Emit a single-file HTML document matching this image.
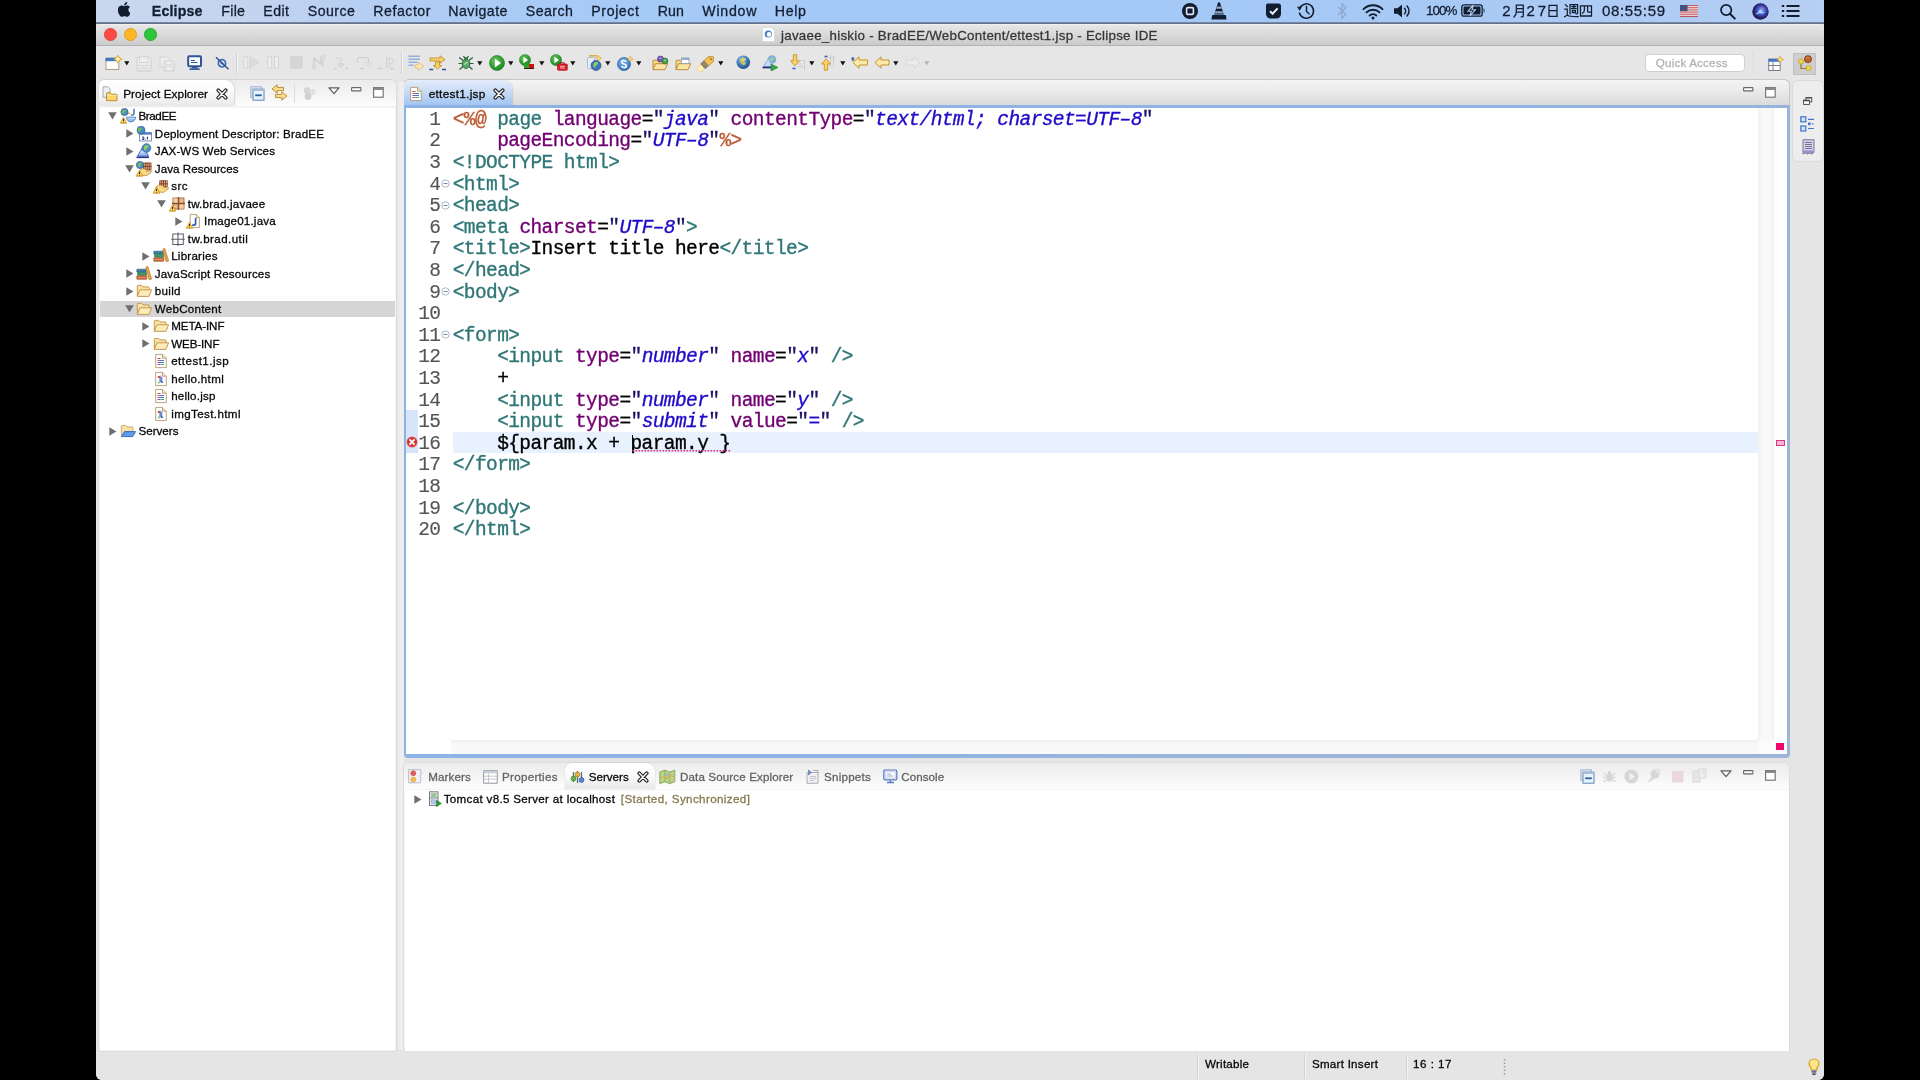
<!DOCTYPE html>
<html>
<head>
<meta charset="utf-8">
<title>Eclipse IDE</title>
<style>
*{box-sizing:border-box;margin:0;padding:0}
html,body{width:1920px;height:1080px;overflow:hidden;background:#000}
body{font-family:"Liberation Sans",sans-serif;color:#1c1c1c;position:relative}
#win{will-change:transform;position:absolute;left:0;top:0;width:1920px;height:1080px;overflow:hidden}
.a{position:absolute;display:block}
.t{position:absolute;white-space:nowrap;-webkit-text-stroke:.28px currentColor}
.c{position:absolute;white-space:pre;font-family:"Liberation Mono",monospace;font-size:19.5px;letter-spacing:-0.59px;line-height:22px;color:#000;-webkit-text-stroke:.35px currentColor}
.tg{color:#2f7676}.at{color:#720072}.vl{color:#200ac8;font-style:italic}.dr{color:#bc5a34}
.ln{color:#555;-webkit-text-stroke:.12px currentColor}
.q{color:#1b1464}
</style>
</head>
<body>
<div id="win">
<div class="a" style="left:96px;top:20px;width:1728px;height:1060px;background:#e5e5e5;border-radius:0 0 6px 6px;"></div>
<div class="a" style="left:96px;top:0px;width:1728px;height:22px;background:linear-gradient(90deg,#c9d6ee 0px,#c4d4ef 150px,#b2cdf3 300px,#a8cbf6 420px,#a3c9f8 800px,#a6c9f6 1300px,#afcbf4 1550px,#b6cff2 1728px);"></div>
<div class="a" style="left:96px;top:22px;width:1728px;height:2px;background:linear-gradient(#8090ac,#59657e);"></div>
<div class="t" style="left:151.80px;top:2.93px;font-size:14.2px;line-height:17.75px;color:#131d30;letter-spacing:0.162px;font-weight:bold;">Eclipse</div>
<div class="t" style="left:221.30px;top:2.93px;font-size:14.2px;line-height:17.75px;color:#131d30;letter-spacing:0.273px;">File</div>
<div class="t" style="left:263.30px;top:2.93px;font-size:14.2px;line-height:17.75px;color:#131d30;letter-spacing:0.410px;">Edit</div>
<div class="t" style="left:307.80px;top:2.93px;font-size:14.2px;line-height:17.75px;color:#131d30;letter-spacing:0.442px;">Source</div>
<div class="t" style="left:373.30px;top:2.93px;font-size:14.2px;line-height:17.75px;color:#131d30;letter-spacing:0.505px;">Refactor</div>
<div class="t" style="left:448.30px;top:2.93px;font-size:14.2px;line-height:17.75px;color:#131d30;letter-spacing:0.451px;">Navigate</div>
<div class="t" style="left:525.80px;top:2.93px;font-size:14.2px;line-height:17.75px;color:#131d30;letter-spacing:0.442px;">Search</div>
<div class="t" style="left:591.30px;top:2.93px;font-size:14.2px;line-height:17.75px;color:#131d30;letter-spacing:0.584px;">Project</div>
<div class="t" style="left:657.80px;top:2.93px;font-size:14.2px;line-height:17.75px;color:#131d30;letter-spacing:0.075px;">Run</div>
<div class="t" style="left:702.30px;top:2.93px;font-size:14.2px;line-height:17.75px;color:#131d30;letter-spacing:0.739px;">Window</div>
<div class="t" style="left:774.80px;top:2.93px;font-size:14.2px;line-height:17.75px;color:#131d30;letter-spacing:0.665px;">Help</div>
<svg class="a" style="left:118px;top:2px;" width="12.4" height="16" viewBox="2 2.300 11 14.900" preserveAspectRatio="none"><path d="M11.2 9.6c0-1.7 1.4-2.5 1.5-2.6-.8-1.2-2.1-1.4-2.5-1.4-1.1-.1-2.1.6-2.6.6-.6 0-1.4-.6-2.3-.6-1.2 0-2.3.7-2.9 1.8-1.2 2.1-.3 5.3.9 7 .6.8 1.3 1.8 2.2 1.7.9 0 1.2-.6 2.3-.6 1 0 1.3.6 2.3.6.9 0 1.5-.8 2.1-1.7.7-1 .9-1.9.9-2-.1 0-1.9-.7-1.9-2.8zM9.5 4.5c.5-.6.8-1.4.7-2.2-.7 0-1.5.5-2 1-.4.5-.8 1.3-.7 2.1.8.1 1.5-.4 2-.9z" fill="#131d30"/></svg>
<svg class="a" style="left:1181px;top:2px;" width="18" height="18" viewBox="0 0 18 18" preserveAspectRatio="none"><circle cx="9" cy="9" r="8" fill="#131d30"/><rect x="5.6" y="5.6" width="6.8" height="6.8" rx="1.2" fill="none" stroke="#dfe8f8" stroke-width="1.6"/></svg>
<svg class="a" style="left:1210px;top:1px;" width="18" height="20" viewBox="0 0 18 20" preserveAspectRatio="none"><path d="M9 1.2c.7 0 1 .5 1.2 1.1l3.6 11.2H4.2L7.8 2.3C8 1.700 8.300 1.200 9 1.200z" fill="#131d30"/><path d="M6.900 5.600h4.200l.7 2.200H6.200zM5.400 10.200h7.200l.7 2.200H4.700z" fill="#8fa6c8"/><path d="M2.200 14h13.600l.8 4.500H1.400z" fill="#131d30"/></svg>
<svg class="a" style="left:1265px;top:2px;" width="18" height="18" viewBox="0 0 18 18" preserveAspectRatio="none"><path d="M2.500 1.500h11c1.700 0 2.500 1 2.500 2.500v8c0 2.500-2 4.500-4.500 4.500h-6C3 16.500 1 14.500 1 12V4c0-1.500.5-2.500 1.500-2.500z" fill="#131d30"/><path d="M5 9.200l2.600 2.600 5-5.400" fill="none" stroke="#e8effa" stroke-width="2"/></svg>
<svg class="a" style="left:1296px;top:1px;" width="20" height="20" viewBox="0 0 20 20" preserveAspectRatio="none"><path d="M4.200 6.300A7.200 7.200 0 1 1 3.300 11.500" fill="none" stroke="#131d30" stroke-width="1.500"/><path d="M1 5.800l5.200-.3-2.600 4.200z" fill="#131d30"/><path d="M10.500 5.500v5l2.600 2.200" fill="none" stroke="#131d30" stroke-width="1.500" stroke-linecap="round"/></svg>
<svg class="a" style="left:1336px;top:2px;" width="12" height="18" viewBox="0 0 12 18" preserveAspectRatio="none"><path d="M2 5l8 7.500-4 3.500V2l4 3.500L2 13" fill="none" stroke="#90a7cb" stroke-width="1.300"/></svg>
<svg class="a" style="left:1362px;top:2px;" width="22" height="18" viewBox="0 0 22 18" preserveAspectRatio="none"><path d="M1.500 7.200a13.500 13.500 0 0 1 19 0M4.500 10.400a9.200 9.200 0 0 1 13 0M7.700 13.500a4.700 4.700 0 0 1 6.600 0" fill="none" stroke="#131d30" stroke-width="1.900" stroke-linecap="round"/><circle cx="11" cy="16" r="1.500" fill="#131d30"/></svg>
<svg class="a" style="left:1393px;top:2px;" width="20" height="18" viewBox="0 0 20 18" preserveAspectRatio="none"><path d="M1 6.300h3.500L9 2.500v13L4.500 11.700H1z" fill="#131d30"/><path d="M11.500 6.200a4 4 0 0 1 0 5.600M14 4a7.200 7.200 0 0 1 0 10" fill="none" stroke="#131d30" stroke-width="1.500" stroke-linecap="round"/></svg>
<div class="t" style="left:1426.00px;top:3.40px;font-size:13.4px;line-height:16.75px;color:#131d30;letter-spacing:-0.924px;">100%</div>
<svg class="a" style="left:1461px;top:4px;" width="26" height="14" viewBox="0 0 26 14" preserveAspectRatio="none"><rect x=".8" y=".8" width="20.400" height="11.400" rx="2.200" fill="none" stroke="#131d30" stroke-width="1.300"/><rect x="2.500" y="2.500" width="17" height="8" rx="1" fill="#131d30"/><path d="M22.700 4.300c1.200.3 1.200 4.100 0 4.400z" fill="#131d30"/><path d="M12.200 1.200L7 7.200h3.300L9 12l5.400-6.300h-3.300z" fill="#131d30" stroke="#b4cdf3" stroke-width="1.100"/></svg>
<div class="t" style="left:1502.30px;top:2.17px;font-size:15px;line-height:18.75px;color:#131d30;letter-spacing:1.058px;">2</div>
<div class="t" style="left:1526.50px;top:2.17px;font-size:15px;line-height:18.75px;color:#131d30;letter-spacing:2.815px;">27</div>
<div class="t" style="left:1602.00px;top:2.17px;font-size:15px;line-height:18.75px;color:#131d30;letter-spacing:0.659px;">08:55:59</div>
<svg class="a" style="left:1513px;top:4px;" width="12" height="14" viewBox="0 0 12 14" preserveAspectRatio="none"><path d="M3.300 1.200h7v10.500c0 1-.5 1.300-2 1.200M3.300 1.200v6.500c0 2.500-.8 4-2.300 5.300M3.600 4.600h6.400M3.600 8h6.400" fill="none" stroke="#131d30" stroke-width="1.250" stroke-linecap="square"/></svg>
<svg class="a" style="left:1547px;top:4px;" width="12" height="14" viewBox="0 0 12 14" preserveAspectRatio="none"><path d="M2 1.400h8v11h-8zM2.300 6.700h7.400" fill="none" stroke="#131d30" stroke-width="1.250" stroke-linecap="square"/></svg>
<svg class="a" style="left:1564px;top:3px;" width="15" height="15" viewBox="0 0 15 15" preserveAspectRatio="none"><path d="M1.500 1.800l1.800 1.700M.8 6.200h2.500v5.200M.6 13.800c1.500-1.200 2.400-1.800 3.200-1.400 1.500 1.300 4 1.400 10.300 1.300M6 10.800V1.600h7.600v8.200c0 .9-.4 1.100-1.400 1M8 3.700h3.700M9.800 2.200v3.400M7.600 5.700h4.400M8.400 7.500h3v2h-3z" fill="none" stroke="#131d30" stroke-width="1.250" stroke-linecap="square" stroke-width="1.050"/></svg>
<svg class="a" style="left:1579px;top:4px;" width="14" height="14" viewBox="0 0 14 14" preserveAspectRatio="none"><path d="M1.500 1.800h11v10.400h-11zM5.400 2v3.800c0 1.700-.6 2.800-1.800 3.500M8.600 2v5.200c0 .8.300 1 1.200 1h2.400M1.800 11.800h10.400" fill="none" stroke="#131d30" stroke-width="1.250" stroke-linecap="square"/></svg>
<svg class="a" style="left:1680px;top:5px;" width="19" height="13" viewBox="0 0 19 13" preserveAspectRatio="none"><rect width="18" height="12" fill="#f4eef0"/><rect y="0.00" width="18" height="0.95" fill="#c4545c"/><rect y="1.85" width="18" height="0.95" fill="#c4545c"/><rect y="3.70" width="18" height="0.95" fill="#c4545c"/><rect y="5.55" width="18" height="0.95" fill="#c4545c"/><rect y="7.40" width="18" height="0.95" fill="#c4545c"/><rect y="9.25" width="18" height="0.95" fill="#c4545c"/><rect y="11.10" width="18" height="0.95" fill="#c4545c"/><rect width="7.500" height="6.200" fill="#46507e"/><rect y="11.200" width="18" height="0.800" fill="#b0505c"/></svg>
<svg class="a" style="left:1719px;top:3px;" width="18" height="17" viewBox="0 0 18 17" preserveAspectRatio="none"><circle cx="7.200" cy="7" r="5.200" fill="none" stroke="#131d30" stroke-width="1.700"/><path d="M11 10.800l4.800 4.800" stroke="#131d30" stroke-width="2" stroke-linecap="round"/></svg>
<svg class="a" style="left:1752px;top:3px;" width="17" height="17" viewBox="0 0 17 17" preserveAspectRatio="none"><defs><radialGradient id="sg" cx=".55" cy=".45" r=".6"><stop offset="0" stop-color="#7fd0ff"/><stop offset=".35" stop-color="#4a62d8"/><stop offset=".7" stop-color="#2a2470"/><stop offset="1" stop-color="#161238"/></radialGradient></defs><circle cx="8.500" cy="8.500" r="8.200" fill="url(#sg)"/><path d="M3 11c2-.5 3.500-2 5-4.500 1 2 2.500 3 5.500 2.500-2 1.500-4 1.800-5.500.8C6.800 11 5 11.500 3 11z" fill="#bfe6ff" opacity=".85"/><path d="M9 3.500c1.500.5 3 1.500 4 3-1.500-.8-3-1-4.500-.5z" fill="#e45a9a" opacity=".8"/></svg>
<svg class="a" style="left:1781px;top:4px;" width="20" height="14" viewBox="0 0 20 14" preserveAspectRatio="none"><path d="M5.500 2h13M5.500 7h13M5.500 12h13" stroke="#131d30" stroke-width="2.100"/><path d="M.8 2h2.400M.8 7h2.400M.8 12h2.400" stroke="#131d30" stroke-width="2.100"/></svg>
<div class="a" style="left:96px;top:24px;width:1728px;height:22px;background:linear-gradient(#f6f6f6 0,#e6e6e5 1.500px,#dcdcdc 40%,#cbcbcb);border-radius:5px 5px 0 0;border-bottom:1px solid #b3b3b3;"></div>
<div class="a" style="left:104.0px;top:28.099999999999998px;width:12.6px;height:12.6px;background:#fc4a44;border-radius:50%;border:0.5px solid #e0443e;"></div>
<div class="a" style="left:124.10000000000001px;top:28.099999999999998px;width:12.6px;height:12.6px;background:#fdb724;border-radius:50%;border:0.5px solid #e0a028;"></div>
<div class="a" style="left:144.2px;top:28.099999999999998px;width:12.6px;height:12.6px;background:#2bc63a;border-radius:50%;border:0.5px solid #27aa35;"></div>
<svg class="a" style="left:762px;top:27px;" width="13" height="15" viewBox="0 0 13 15" preserveAspectRatio="none"><path d="M.5.500h9l3 3v11H.5z" fill="#fff" stroke="#d0d0d0" stroke-width=".6"/><circle cx="6.300" cy="7" r="3.600" fill="#3f7fc0"/><circle cx="7" cy="7.400" r="2.300" fill="#fff"/></svg>
<div class="t" style="left:781.00px;top:28.09px;font-size:13.3px;line-height:16.62px;color:#363636;letter-spacing:0.276px;">javaee_hiskio - BradEE/WebContent/ettest1.jsp - Eclipse IDE</div>
<div class="a" style="left:96px;top:46px;width:1728px;height:34px;background:#e6e6e6;"></div>
<div class="a" style="left:96px;top:80px;width:1728px;height:1000px;background:#e5e5e5;border-radius:0 0 6px 6px;"></div>
<svg class="a" style="left:104.5px;top:54.5px;" width="17" height="16" viewBox="0 0 17 16" preserveAspectRatio="none"><rect x="1" y="3.200" width="12.800" height="11.300" fill="#fdfdfd" stroke="#a89670" stroke-width=".9"/><rect x="1" y="3.200" width="12.800" height="2.600" fill="#3f7fd0" stroke="#2f63a8" stroke-width=".7"/><path d="M12.800 .3l2 2.700 1.900 1-1.900 1.200-2 2.800-1.900-2.800L9 4l1.900-1z" fill="#fbe07c" stroke="#c89a2c" stroke-width=".8" stroke-linejoin="round"/><circle cx="12.800" cy="4" r="1.200" fill="#fff8d0"/></svg>
<svg class="a" style="left:123.7px;top:61.4px;" width="6" height="5" viewBox="0 0 6 5" preserveAspectRatio="none"><path d="M.2.200h5.200L2.800 4.600z" fill="#111"/></svg>
<svg class="a" style="left:135.5px;top:55.5px;" width="17" height="16" viewBox="0 0 17 16" preserveAspectRatio="none"><path d="M1 1h12.500l1.800 1.800V15H1z" fill="#ececec" stroke="#d3d3d3" stroke-width="1"/><rect x="3.500" y="1" width="8.500" height="5.500" fill="#f0f0f0" stroke="#d3d3d3" stroke-width=".9"/><rect x="3" y="9.500" width="10" height="5.500" fill="#eee" stroke="#d3d3d3" stroke-width=".9"/><path d="M4.500 11.500h7M4.500 13.200h7" stroke="#d3d3d3" stroke-width=".8"/></svg>
<svg class="a" style="left:158.5px;top:55.5px;" width="17" height="16" viewBox="0 0 17 16" preserveAspectRatio="none"><path d="M1 1h8l1.500 1.500V11H1z" fill="#ececec" stroke="#d3d3d3" stroke-width="1"/><path d="M5 5h8.500l1.800 1.800V15H5z" fill="#ececec" stroke="#d3d3d3" stroke-width="1"/><rect x="7" y="5" width="5.500" height="3.500" fill="#f0f0f0" stroke="#d3d3d3" stroke-width=".8"/><rect x="6.800" y="10.500" width="7" height="4.500" fill="#eee" stroke="#d3d3d3" stroke-width=".8"/></svg>
<svg class="a" style="left:186.5px;top:54.5px;" width="16" height="16" viewBox="0 0 16 16" preserveAspectRatio="none"><rect x="1.200" y="1.200" width="12.800" height="10" rx="1" fill="#fff" stroke="#2f5496" stroke-width="2"/><path d="M4 5.500h4M4 7.500h6.500" stroke="#2f5496" stroke-width="1"/><path d="M5.500 11.500l-1.500 2h7.200l-1.500-2z" fill="#2f5496"/><path d="M2.500 14.200h10.200" stroke="#2f5496" stroke-width="1.500"/></svg>
<svg class="a" style="left:214.5px;top:55.5px;" width="15" height="15" viewBox="0 0 15 15" preserveAspectRatio="none"><circle cx="7" cy="7.300" r="3.600" fill="#dfe9f8" stroke="#3f6fb8" stroke-width="1.800"/><circle cx="7" cy="7.300" r="1.200" fill="#3f6fb8"/><path d="M1 1.200l12.500 12" stroke="#2f4f8f" stroke-width="1.500"/></svg>
<div class="a" style="left:236px;top:52px;width:1px;height:21.5px;background:#d2d2d2;"></div>
<div class="a" style="left:237px;top:52px;width:1px;height:21.5px;background:#f4f4f4;"></div>
<svg class="a" style="left:242.5px;top:56px;" width="17" height="13" viewBox="0 0 17 13" preserveAspectRatio="none"><rect x=".7" y=".7" width="3.600" height="11.300" fill="#ededed" stroke="#d3d3d3" stroke-width=".9"/><path d="M6.500 .5l9.500 6-9.500 6z" fill="#dcdcdc" stroke="#d3d3d3" stroke-width=".8"/></svg>
<svg class="a" style="left:267px;top:56px;" width="13" height="13" viewBox="0 0 13 13" preserveAspectRatio="none"><rect x=".7" y=".7" width="4" height="11.300" fill="#ededed" stroke="#d3d3d3" stroke-width=".9"/><rect x="7.500" y=".7" width="4" height="11.300" fill="#ededed" stroke="#d3d3d3" stroke-width=".9"/></svg>
<svg class="a" style="left:289.5px;top:56px;" width="13" height="13" viewBox="0 0 13 13" preserveAspectRatio="none"><rect x=".7" y=".7" width="11.300" height="11.300" fill="#d6d6d6" stroke="#cfcfcf" stroke-width=".9"/></svg>
<svg class="a" style="left:310.5px;top:55px;" width="16" height="15" viewBox="0 0 16 15" preserveAspectRatio="none"><path d="M3 11V3l7 6V2.500" fill="none" stroke="#cdcdcd" stroke-width="1.300"/><circle cx="3" cy="11.800" r="2" fill="#e2e2e2" stroke="#cdcdcd" stroke-width=".9"/><circle cx="12" cy="2.800" r="2.200" fill="#e2e2e2" stroke="#cdcdcd" stroke-width=".9"/><path d="M12 5v7" stroke="#cdcdcd" stroke-width="1.100"/></svg>
<svg class="a" style="left:333px;top:55.5px;" width="16" height="15" viewBox="0 0 16 15" preserveAspectRatio="none"><path d="M2 2h4M8 1v7M5 8h6l-3 3.500z" fill="#e4e4e4" stroke="#d0d0d0" stroke-width="1"/><path d="M.5 12.500h3.500M12 12.500h3.500" stroke="#cfcfcf" stroke-width="1.500"/></svg>
<svg class="a" style="left:356px;top:55.5px;" width="16" height="15" viewBox="0 0 16 15" preserveAspectRatio="none"><path d="M1.500 7V3c0-1 .5-1.500 1.500-1.500h8c1 0 1.500.5 1.500 1.500v3M9.500 6.500h6l-3 3.500z" fill="none" stroke="#d0d0d0" stroke-width="1.100"/><path d="M9.500 6.500h6l-3 3.500z" fill="#e6e6e6"/><path d="M4 12.500h4" stroke="#cfcfcf" stroke-width="1.500"/></svg>
<svg class="a" style="left:377.5px;top:55.5px;" width="17" height="15" viewBox="0 0 17 15" preserveAspectRatio="none"><path d="M8.500 1v11M11 1v11" stroke="#d0d0d0" stroke-width="1.100"/><path d="M11 2c3 0 4 1.500 4 3s-1 3-4 3" fill="none" stroke="#d4d4d4" stroke-width="1"/><path d="M.5 12.500h4M12.500 12.500h4" stroke="#cfcfcf" stroke-width="1.500"/></svg>
<div class="a" style="left:400.5px;top:52px;width:1px;height:21.5px;background:#d2d2d2;"></div>
<div class="a" style="left:401.5px;top:52px;width:1px;height:21.5px;background:#f4f4f4;"></div>
<svg class="a" style="left:407.5px;top:55px;" width="16" height="16" viewBox="0 0 16 16" preserveAspectRatio="none"><path d="M.5 1.300h11.500M.5 4.300h11.500M.5 7.300h9M.5 10.300h5" stroke="#8fb0dc" stroke-width="1.600"/><path d="M9.500 8v2.500H6.800l0 3h2.700V16l5.500-4z" fill="#fbe9b4" stroke="#e0c078" stroke-width=".9" stroke-linejoin="round" transform="translate(.5,-.8)"/></svg>
<svg class="a" style="left:428.5px;top:55px;" width="18" height="16" viewBox="0 0 18 16" preserveAspectRatio="none"><path d="M1 3h10V.8l5 3.700-5 3.700V6H1z" fill="#f8d36c" stroke="#c0902c" stroke-width=".9" stroke-linejoin="round"/><path d="M6.500 7h4v3.500h2.200L8.500 14 4.300 10.500h2.200z" fill="#f8d36c" stroke="#c0902c" stroke-width=".9" stroke-linejoin="round"/><path d="M.3 14.500h4M13 14.500h4" stroke="#2f4f9f" stroke-width="1.700"/></svg>
<svg class="a" style="left:458px;top:55px;" width="16" height="16" viewBox="0 0 16 16" preserveAspectRatio="none"><path d="M1.200 2.500l4 3M14.800 2.500l-4 3M.5 8.500h4M15.500 8.500h-4M1.500 14.500l4-3.500M14.500 14.500l-4-3.500M5.500 1l1.500 2.500M10.500 1L9 3.500" stroke="#2a5a3a" stroke-width="1.200" fill="none"/><ellipse cx="8" cy="8.800" rx="3.800" ry="4.700" fill="#5aa868" stroke="#2a6a3a" stroke-width=".9"/><circle cx="8" cy="3.800" r="1.900" fill="#3a7a4a"/><path d="M6.200 9.500l3.500-2.500" stroke="#b8e0b8" stroke-width="1.200"/></svg>
<svg class="a" style="left:476.7px;top:61.4px;" width="6" height="5" viewBox="0 0 6 5" preserveAspectRatio="none"><path d="M.2.200h5.200L2.800 4.600z" fill="#111"/></svg>
<svg class="a" style="left:488.5px;top:54.5px;" width="16" height="16" viewBox="0 0 16 16" preserveAspectRatio="none"><defs><radialGradient id="rg" cx=".4" cy=".35" r=".75"><stop offset="0" stop-color="#6cc45c"/><stop offset=".6" stop-color="#2f9a2f"/><stop offset="1" stop-color="#1f7a24"/></radialGradient></defs><circle cx="8" cy="8" r="7.500" fill="url(#rg)" stroke="#1f7a24" stroke-width=".6"/><path d="M5.800 3.600l6.200 4.400-6.200 4.400z" fill="#fff"/></svg>
<svg class="a" style="left:507.7px;top:61.4px;" width="6" height="5" viewBox="0 0 6 5" preserveAspectRatio="none"><path d="M.2.200h5.200L2.800 4.600z" fill="#111"/></svg>
<svg class="a" style="left:518.5px;top:53.8px;" width="12" height="12" viewBox="0 0 16 16" preserveAspectRatio="none"><defs><radialGradient id="rg2" cx=".4" cy=".35" r=".75"><stop offset="0" stop-color="#6cc45c"/><stop offset=".6" stop-color="#2f9a2f"/><stop offset="1" stop-color="#1f7a24"/></radialGradient></defs><circle cx="8" cy="8" r="7.500" fill="url(#rg2)" stroke="#1f7a24" stroke-width=".6"/><path d="M5.800 3.600l6.200 4.400-6.200 4.400z" fill="#fff"/></svg>
<div class="a" style="left:524.3px;top:64px;width:5px;height:4.5px;background:#2aa02a;"></div>
<div class="a" style="left:529.3px;top:64px;width:5px;height:4.5px;background:#c81414;"></div>
<div class="a" style="left:524.3px;top:67.8px;width:10px;height:1px;background:#3a1a1a;"></div>
<svg class="a" style="left:538.5px;top:61.4px;" width="6" height="5" viewBox="0 0 6 5" preserveAspectRatio="none"><path d="M.2.200h5.200L2.800 4.600z" fill="#111"/></svg>
<svg class="a" style="left:549.5px;top:53.8px;" width="12" height="12" viewBox="0 0 16 16" preserveAspectRatio="none"><defs><radialGradient id="rg3" cx=".4" cy=".35" r=".75"><stop offset="0" stop-color="#6cc45c"/><stop offset=".6" stop-color="#2f9a2f"/><stop offset="1" stop-color="#1f7a24"/></radialGradient></defs><circle cx="8" cy="8" r="7.500" fill="url(#rg3)" stroke="#1f7a24" stroke-width=".6"/><path d="M5.800 3.600l6.200 4.400-6.200 4.400z" fill="#fff"/></svg>
<svg class="a" style="left:556.5px;top:62px;" width="11" height="9" viewBox="0 0 11 9" preserveAspectRatio="none"><rect x=".5" y="2" width="9.800" height="6.300" rx=".8" fill="#d8202c" stroke="#a81420" stroke-width=".7"/><path d="M3.500 2V.8h3.800V2" fill="none" stroke="#a81420" stroke-width="1"/><path d="M3 4.300h4.800M3 6h4.800" stroke="#ffd0d0" stroke-width=".9"/></svg>
<svg class="a" style="left:569.7px;top:61.4px;" width="6" height="5" viewBox="0 0 6 5" preserveAspectRatio="none"><path d="M.2.200h5.200L2.800 4.600z" fill="#111"/></svg>
<svg class="a" style="left:586px;top:55px;" width="17" height="16" viewBox="0 0 17 16" preserveAspectRatio="none"><rect x="1.500" y="2.500" width="7" height="11" rx="1" fill="#e8eef8" stroke="#a8b4c8" stroke-width=".9"/><path d="M3 .8h8" stroke="#d8b048" stroke-width="1.600"/><circle cx="10" cy="10.500" r="5" fill="#3f74b8" stroke="#2a4f88" stroke-width=".7"/><path d="M7.500 9c1-2 3-2.400 4.500-1.400.5 1.500-.8 2-1.800 2.800-.8.800-.3 2-1.300 2.300-1.100-.5-1.900-2.200-1.400-3.700z" fill="#8cd060"/><path d="M12.500 .3l1 1.800 1.800 1-1.800 1-1 1.800-1-1.800-1.800-1 1.800-1z" fill="#fbe07c" stroke="#c89a2c" stroke-width=".6"/></svg>
<svg class="a" style="left:605.2px;top:61.4px;" width="6" height="5" viewBox="0 0 6 5" preserveAspectRatio="none"><path d="M.2.200h5.200L2.800 4.600z" fill="#111"/></svg>
<svg class="a" style="left:617px;top:55.5px;" width="17" height="15" viewBox="0 0 17 15" preserveAspectRatio="none"><defs><radialGradient id="sb" cx=".4" cy=".35" r=".75"><stop offset="0" stop-color="#7ab4ec"/><stop offset="1" stop-color="#2f6cb4"/></radialGradient></defs><circle cx="7" cy="8" r="6.600" fill="url(#sb)" stroke="#2a5a9a" stroke-width=".6"/><path d="M9.300 5.800c-.5-.8-1.300-1.200-2.400-1.200-1.300 0-2.200.7-2.200 1.700 0 2.300 4.800 1 4.800 3.500 0 1.100-1 1.800-2.500 1.800-1.200 0-2.100-.5-2.600-1.400" fill="none" stroke="#fff" stroke-width="1.500"/><path d="M13.200 .3l1 1.800 1.800 1-1.800 1-1 1.800-1-1.800-1.800-1 1.800-1z" fill="#fbe07c" stroke="#c89a2c" stroke-width=".6"/></svg>
<svg class="a" style="left:636px;top:61.4px;" width="6" height="5" viewBox="0 0 6 5" preserveAspectRatio="none"><path d="M.2.200h5.200L2.800 4.600z" fill="#111"/></svg>
<svg class="a" style="left:651.5px;top:54.5px;" width="18" height="16" viewBox="0 0 18 16" preserveAspectRatio="none"><g transform="translate(0,1.500)"><path d="M1 13V4.500c0-.5.300-.8.800-.8h3.300l1.300 1.500h5c.5 0 .8.300.8.800v1.200" fill="#f7d98c" stroke="#b8822c" stroke-width=".9"/><path d="M1 13.200l2.600-6h12l-2.600 6z" fill="#fbe4a4" stroke="#b8822c" stroke-width=".9" stroke-linejoin="round"/></g><circle cx="8.500" cy="4" r="3" fill="#7a5ab8" stroke="#4a2f88" stroke-width=".6"/><circle cx="13" cy="6" r="3" fill="#4aa04a" stroke="#2a702a" stroke-width=".6"/><path d="M7.500 3.200h2M12 5.200h2" stroke="#e8e0ff" stroke-width=".8"/></svg>
<svg class="a" style="left:674.5px;top:54.5px;" width="17" height="16" viewBox="0 0 17 16" preserveAspectRatio="none"><g transform="translate(0,1.500)"><path d="M1 13V4.500c0-.5.300-.8.800-.8h3.300l1.300 1.500h5c.5 0 .8.300.8.800v1.200" fill="#f7d98c" stroke="#b8822c" stroke-width=".9"/><path d="M1 13.200l2.600-6h12l-2.600 6z" fill="#fbe4a4" stroke="#b8822c" stroke-width=".9" stroke-linejoin="round"/></g><rect x="6.500" y="3" width="7.500" height="5.500" fill="#fff" stroke="#8a9ab8" stroke-width=".8"/><rect x="6.500" y="3" width="7.500" height="1.800" fill="#8aa4d0"/></svg>
<svg class="a" style="left:696.5px;top:54.5px;" width="18" height="17" viewBox="0 0 18 17" preserveAspectRatio="none"><g transform="rotate(-42 9 8.500)"><rect x="-1.500" y="5.500" width="6.500" height="6" rx="2.500" fill="#fdf0b8" stroke="#e0c880" stroke-width=".6"/><rect x="5" y="5.200" width="4.500" height="6.600" fill="#9a8478" stroke="#6a5448" stroke-width=".6"/><path d="M9.500 5h6l3.500 3.500-3.500 3.500h-6z" fill="#f0c45c" stroke="#b88a2c" stroke-width=".8"/><circle cx="15.500" cy="8.500" r="1" fill="#b06030"/></g></svg>
<svg class="a" style="left:717.5px;top:61.4px;" width="6" height="5" viewBox="0 0 6 5" preserveAspectRatio="none"><path d="M.2.200h5.200L2.800 4.600z" fill="#111"/></svg>
<svg class="a" style="left:735.5px;top:54.5px;" width="15" height="15" viewBox="0 0 15 15" preserveAspectRatio="none"><defs><radialGradient id="gl" cx=".4" cy=".3" r=".8"><stop offset="0" stop-color="#8cc4f0"/><stop offset=".55" stop-color="#3a74b8"/><stop offset="1" stop-color="#1f3f78"/></radialGradient></defs><circle cx="7.300" cy="7.300" r="6.800" fill="url(#gl)"/><path d="M4 4c1.500-1.500 3.500-2 5-1 1 1-.2 2.200-1 3 .8 1 1.800 1.200 2 2.500-.5 1.500-2 2-3.200 1.500C6 8.800 4.800 8.500 4.200 7 3.800 6 3.600 5 4 4z" fill="#d8c84c" opacity=".85"/><path d="M6 3.500l2 2.500 1.500-2.200" fill="none" stroke="#f4eea0" stroke-width=".8"/></svg>
<svg class="a" style="left:762px;top:55px;" width="17" height="16" viewBox="0 0 17 16" preserveAspectRatio="none"><circle cx="10" cy="4.500" r="4" fill="#7ab0e4" stroke="#9ab4d0" stroke-width=".6"/><path d="M8 4c1-1.500 2.500-1.800 3.500-1 .4 1-.6 1.500-1.400 2-.6.600-.2 1.500-1 1.800C8.300 6.300 7.600 5 8 4z" fill="#a8d880"/><path d="M6.500 3L1.500 11.500h9.500z" fill="#c4d8f4" stroke="#7a98d0" stroke-width=".8" stroke-linejoin="round" opacity=".9"/><path d="M.5 12.500h8.500" stroke="#1f2f8c" stroke-width="1.700"/><path d="M9 9l7 3.500-7 3.500z" fill="#3aa84a" stroke="#1f7a2c" stroke-width=".6"/></svg>
<svg class="a" style="left:790px;top:54px;" width="16" height="17" viewBox="0 0 16 17" preserveAspectRatio="none"><path d="M10 6.500h4.500v9.500M8 10h4M8 12.500h5" fill="none" stroke="#c4c8d4" stroke-width=".9"/><path d="M3.300 .6h3.400v6.200h2.800L5 12 .5 6.800h2.800z" fill="#fbd468" stroke="#c8902c" stroke-width=".9" stroke-linejoin="round"/><path d="M2.500 14.500h3" stroke="#3f5fb8" stroke-width="1.600"/></svg>
<svg class="a" style="left:809px;top:61.4px;" width="6" height="5" viewBox="0 0 6 5" preserveAspectRatio="none"><path d="M.2.200h5.200L2.800 4.600z" fill="#111"/></svg>
<svg class="a" style="left:820.5px;top:54px;" width="16" height="17" viewBox="0 0 16 17" preserveAspectRatio="none"><path d="M9.500 1v12M12.500 2v11M7 3.500h7" fill="none" stroke="#c4c8d4" stroke-width=".9"/><path d="M3.300 16.200h3.400V10h2.800L5 4.800.5 10h2.800z" fill="#fbd468" stroke="#c8902c" stroke-width=".9" stroke-linejoin="round"/><path d="M3.500 2.500h3" stroke="#3f5fb8" stroke-width="1.600"/></svg>
<svg class="a" style="left:839.8px;top:61.4px;" width="6" height="5" viewBox="0 0 6 5" preserveAspectRatio="none"><path d="M.2.200h5.200L2.800 4.600z" fill="#111"/></svg>
<svg class="a" style="left:850.5px;top:55.5px;" width="18" height="14" viewBox="0 0 18 14" preserveAspectRatio="none"><path d="M8 .8L2 6.500l6 5.700V9h8.500V4H8z" fill="#fbe9a8" stroke="#c8902c" stroke-width="1" stroke-linejoin="round"/><path d="M1.800 1v4M.3 2.200h3M.3 3.800h3" stroke="#2f4f8f" stroke-width=".9"/></svg>
<svg class="a" style="left:873.5px;top:55.5px;" width="16" height="14" viewBox="0 0 16 14" preserveAspectRatio="none"><path d="M7 .8L1 6.500l6 5.700V9h8V4H7z" fill="#fbe9a8" stroke="#c8902c" stroke-width="1" stroke-linejoin="round"/></svg>
<svg class="a" style="left:893.2px;top:61.4px;" width="6" height="5" viewBox="0 0 6 5" preserveAspectRatio="none"><path d="M.2.200h5.200L2.800 4.600z" fill="#111"/></svg>
<svg class="a" style="left:904.5px;top:55.5px;" width="16" height="14" viewBox="0 0 16 14" preserveAspectRatio="none"><path d="M9 .8l6 5.700-6 5.700V9H1V4h8z" fill="#ececec" stroke="#d6d6d6" stroke-width="1" stroke-linejoin="round"/></svg>
<svg class="a" style="left:924px;top:61.4px;" width="6" height="5" viewBox="0 0 6 5" preserveAspectRatio="none"><path d="M.2.200h5.200L2.800 4.600z" fill="#b4b4b4"/></svg>
<div class="a" style="left:1644.7px;top:53.7px;width:100.5px;height:18px;background:#fff;border:1px solid #cfcfcf;border-radius:4px;"></div>
<div class="t" style="left:1655.80px;top:55.72px;font-size:11.6px;line-height:14.50px;color:#b2b2b2;letter-spacing:0.189px;">Quick Access</div>
<svg class="a" style="left:1752px;top:52px;" width="2" height="22" viewBox="0 0 2 22" preserveAspectRatio="none"><path d="M1 0v22" stroke="#d4d4d4" stroke-width="1" stroke-dasharray="1.500 1.500"/></svg>
<svg class="a" style="left:1768px;top:55.5px;" width="16" height="16" viewBox="0 0 16 16" preserveAspectRatio="none"><rect x=".7" y="3" width="11.500" height="11.500" fill="#fff" stroke="#7a8088" stroke-width="1"/><rect x=".7" y="3" width="11.500" height="2.800" fill="#3f74c8"/><path d="M.7 9.500h11.500M5 5.800v8.700" stroke="#7a8088" stroke-width="1"/><path d="M12.200 .3l1.200 2 2 1.200-2 1.200-1.200 2-1.200-2-2-1.200 2-1.200z" fill="#fbe07c" stroke="#c89a2c" stroke-width=".7"/></svg>
<div class="a" style="left:1793px;top:52.5px;width:23px;height:22.5px;background:#cdcdcd;border:1px solid #c0c0c0;"></div>
<svg class="a" style="left:1796.5px;top:55px;" width="17" height="17" viewBox="0 0 17 17" preserveAspectRatio="none"><path d="M4 6.500v7h7" fill="none" stroke="#8a7a2c" stroke-width="1.200"/><circle cx="4" cy="6.500" r="2.400" fill="#f4d84c" stroke="#b89a1c" stroke-width=".7"/><circle cx="11.500" cy="13.200" r="2.400" fill="#f4d84c" stroke="#b89a1c" stroke-width=".7"/><circle cx="11" cy="4.200" r="3.600" fill="#b8602c" stroke="#7a3a14" stroke-width=".7"/><path d="M9 3.500c1-1 2.500-1 3.500 0" stroke="#e8a070" stroke-width=".9" fill="none"/></svg>
<div class="a" style="left:98px;top:79px;width:298.8px;height:972.5px;background:#f4f4f4;border:1px solid #dcdcdc;border-top-color:#d6d6d6;border-radius:6px 6px 3px 3px;"></div>
<div class="a" style="left:99px;top:80px;width:296.8px;height:27.8px;background:linear-gradient(#ececec,#f4f4f4 50%,#fefefe);border-radius:5px 5px 0 0;"></div>
<div class="a" style="left:99.5px;top:107.8px;width:295.9px;height:942.7px;background:#fff;"></div>
<div class="a" style="left:98.5px;top:79.5px;width:135px;height:27px;background:linear-gradient(#ffffff,#fbfbfb 45%,#e6e6e6);border-radius:6px 9px 0 0;box-shadow:1px 0 1.500px rgba(0,0,0,.13);"></div>
<div class="a" style="left:99px;top:106.3px;width:296.5px;height:1.5px;background:linear-gradient(#ededed,#fafafa);"></div>
<svg class="a" style="left:102px;top:86px;" width="17" height="16" viewBox="0 0 17 16" preserveAspectRatio="none"><path d="M1 .8h5l2 2v8.500H1z" fill="#eceef4" stroke="#9a9aa6" stroke-width=".8"/><path d="M4.500 14.700V7.500c0-.5.300-.8.800-.8h3l1.200 1.500h4.700c.5 0 .8.300.8.800v5.700z" fill="#f9d468" stroke="#b8862c" stroke-width=".9"/><path d="M5 9.500h9.500" stroke="#fdeaa0" stroke-width="1"/></svg>
<div class="t" style="left:123.20px;top:86.93px;font-size:11.8px;line-height:14.75px;color:#050505;letter-spacing:0.057px;">Project Explorer</div>
<svg class="a" style="left:215.5px;top:87.5px;" width="12" height="12" viewBox="0 0 12 12" preserveAspectRatio="none"><path d="M2.300 2.300l7.400 7.400M9.700 2.300l-7.400 7.400" stroke="#1c1c1c" stroke-width="3.700" stroke-linecap="round"/><path d="M2.300 2.300l7.400 7.400M9.700 2.300l-7.400 7.400" stroke="#fff" stroke-width="1.500" stroke-linecap="round"/></svg>
<svg class="a" style="left:249.5px;top:85.8px;" width="15" height="15" viewBox="0 0 15 15" preserveAspectRatio="none"><rect x=".8" y=".8" width="10.800" height="10.800" fill="#dce6f2" stroke="#9ab0cc" stroke-width=".9"/><rect x="3" y="3.200" width="11" height="11" fill="#e4f4ff" stroke="#6f8fb4" stroke-width="1.100"/><rect x="3" y="3.200" width="11" height="1.800" fill="#a8c0dc"/><path d="M5.200 9.300h6.600" stroke="#2f5f94" stroke-width="1.800"/></svg>
<svg class="a" style="left:270.5px;top:83.7px;" width="17" height="17" viewBox="0 0 17 17" preserveAspectRatio="none"><path d="M6.200.8L1 5l5.200 4.200V6.600h6.300V3.400H6.200z" fill="#f9dc8c" stroke="#b8862c" stroke-width=".9" stroke-linejoin="round"/><path d="M10.800 7.800L16 12l-5.200 4.200v-2.600H4.500v-3.200h6.300z" fill="#f9dc8c" stroke="#b8862c" stroke-width=".9" stroke-linejoin="round"/></svg>
<div class="a" style="left:294px;top:84px;width:1px;height:19px;background:#dadada;"></div>
<svg class="a" style="left:301.5px;top:86px;" width="15" height="15" viewBox="0 0 15 15" preserveAspectRatio="none"><circle cx="5" cy="4.500" r="3.200" fill="#d4d4d4"/><circle cx="10.500" cy="6" r="3" fill="#dedede"/><circle cx="6" cy="10.500" r="3.400" fill="#d0d0d0"/></svg>
<svg class="a" style="left:328px;top:87px;" width="12" height="8" viewBox="0 0 12 8" preserveAspectRatio="none"><path d="M1 .8h10L6 6.600z" fill="#fff" stroke="#5c5c5c" stroke-width="1.200" stroke-linejoin="round"/></svg>
<svg class="a" style="left:351px;top:87.3px;" width="11" height="5" viewBox="0 0 11 5" preserveAspectRatio="none"><rect x=".6" y=".6" width="9.300" height="3.300" rx=".5" fill="#fff" stroke="#666" stroke-width="1.100"/></svg>
<svg class="a" style="left:373px;top:87.3px;" width="11" height="11" viewBox="0 0 11 11" preserveAspectRatio="none"><rect x=".6" y=".6" width="9.600" height="9.600" fill="#fff" stroke="#6c6c6c" stroke-width="1.100"/><rect x=".6" y=".6" width="9.600" height="2.400" fill="#8a8a8a"/></svg>
<div class="a" style="left:99.5px;top:300.5px;width:295.9px;height:16px;background:#d5d5d5;"></div>
<svg class="a" style="left:108.2px;top:112.25px;" width="9" height="8" viewBox="0 0 9 8" preserveAspectRatio="none"><path d="M.2.300h8.600l-4.300 7.200z" fill="#6f6f6f"/></svg>
<svg class="a" style="left:120.0px;top:108.45px;" width="16" height="16" viewBox="0 0 16 16" preserveAspectRatio="none"><path d="M6.500 9.200h9c-.2 2.800-1.800 4.600-4.500 4.600s-4.300-1.800-4.500-4.600z" fill="#8fc0f0" stroke="#3f74b8" stroke-width=".9"/><path d="M7 10.200h8" stroke="#d8ecff" stroke-width=".9"/><path d="M14 .8v4.500c0 1.200-.6 1.800-1.600 1.800-.5 0-.9-.1-1.200-.4" fill="none" stroke="#2d5fb4" stroke-width="1.300"/><path d="M8 4.500l1 1.500 1.500-1" fill="none" stroke="#d0a030" stroke-width="1"/><circle cx="4.500" cy="4" r="3.600" fill="#4a8cc8" stroke="#2f5f94" stroke-width=".7"/><path d="M2 3.200c1-1.600 2.600-1.800 3.600-1 .4 1.200-.6 1.600-1.400 2.200-.6.600-.2 1.600-1 1.800C2.200 5.800 1.600 4.400 2 3.200z" fill="#74c24a"/><path d="M3.500 9.200L.300 15.200h6.400z" fill="#fbd45c" stroke="#c98a1c" stroke-width=".8" stroke-linejoin="round"/><path d="M3.500 11v2.200M3.500 14v.6" stroke="#3a2a08" stroke-width="1"/></svg>
<div class="t" style="left:138.50px;top:109.07px;font-size:11.6px;line-height:14.50px;color:#050505;letter-spacing:-0.395px;">BradEE</div>
<svg class="a" style="left:125.64999999999999px;top:129.45px;" width="8" height="9" viewBox="0 0 8 9" preserveAspectRatio="none"><path d="M.3.200l7.200 4.300-7.200 4.300z" fill="#6f6f6f"/></svg>
<svg class="a" style="left:136.35px;top:125.95px;" width="16" height="16" viewBox="0 0 16 16" preserveAspectRatio="none"><rect x="3.500" y="6.500" width="12" height="8.500" fill="#fff" stroke="#6f86b8" stroke-width=".9"/><rect x="3.500" y="6.500" width="12" height="2.200" fill="#5f7fc8"/><path d="M6 11h1.800v2.500H6M7.800 12.200H6.500M9.200 13.300h.6M11.500 10.800v2.800M10.800 11.500l.7-.7" stroke="#2a3a6c" stroke-width=".9" fill="none"/><circle cx="5" cy="4.200" r="4" fill="#4a8cc8" stroke="#2f5f94" stroke-width=".7"/><path d="M2 3.200c1-1.600 2.600-1.800 3.600-1 .4 1.200-.6 1.600-1.400 2.200-.6.600-.2 1.600-1 1.800C2.200 5.800 1.600 4.400 2 3.200z" fill="#74c24a"/></svg>
<div class="t" style="left:154.85px;top:126.57px;font-size:11.6px;line-height:14.50px;color:#050505;letter-spacing:0.170px;">Deployment Descriptor: BradEE</div>
<svg class="a" style="left:125.64999999999999px;top:146.95px;" width="8" height="9" viewBox="0 0 8 9" preserveAspectRatio="none"><path d="M.3.200l7.200 4.300-7.200 4.300z" fill="#6f6f6f"/></svg>
<svg class="a" style="left:136.35px;top:143.45px;" width="16" height="16" viewBox="0 0 16 16" preserveAspectRatio="none"><path d="M7 3.500L1.500 13h11z" fill="#9fc0f0" stroke="#3f5fb8" stroke-width=".9" stroke-linejoin="round"/><path d="M.5 14.300h12.500" stroke="#1f2f8c" stroke-width="1.600"/><path d="M4.500 9h5" stroke="#e8f0ff" stroke-width="1"/><circle cx="10.500" cy="5" r="4.300" fill="#4a8cc8" stroke="#2f5f94" stroke-width=".7"/><path d="M8 4c1-2 3-2.400 4.500-1.400.5 1.500-.8 2-1.800 2.800-.8.800-.3 2-1.300 2.300C8.300 7.200 7.500 5.500 8 4z" fill="#8cd060"/></svg>
<div class="t" style="left:154.85px;top:144.07px;font-size:11.6px;line-height:14.50px;color:#050505;letter-spacing:0.098px;">JAX-WS Web Services</div>
<svg class="a" style="left:124.55px;top:164.75px;" width="9" height="8" viewBox="0 0 9 8" preserveAspectRatio="none"><path d="M.2.300h8.600l-4.300 7.200z" fill="#6f6f6f"/></svg>
<svg class="a" style="left:136.35px;top:160.95px;" width="16" height="16" viewBox="0 0 16 16" preserveAspectRatio="none"><rect x="7.500" y="2" width="7.500" height="7" fill="#e8b88a" stroke="#8a4a2c" stroke-width=".9"/><path d="M11.200 1.200v8M6.800 5.400h8.800M9.300 2v7M13.200 2v7" stroke="#7a3e24" stroke-width=".9"/><path d="M3.500 9.500c1.500-1.500 3-2.200 4.500-1.700l2.500 1c1 .3 1 1.400 0 1.400l4-.4c1.200-.1 1.500.9.500 1.700l-3.500 2.600c-.8.500-1.800.7-3 .5l-5-.8z" fill="#f8d98c" stroke="#c08a30" stroke-width=".8" stroke-linejoin="round"/><circle cx="4" cy="4" r="3.600" fill="#4a8cc8" stroke="#2f5f94" stroke-width=".7"/><path d="M2 3.200c1-1.600 2.600-1.800 3.600-1 .4 1.200-.6 1.600-1.400 2.200-.6.600-.2 1.600-1 1.800C2.200 5.800 1.600 4.400 2 3.200z" fill="#74c24a"/><path d="M3.500 9.200L.300 15.200h6.400z" fill="#fbd45c" stroke="#c98a1c" stroke-width=".8" stroke-linejoin="round"/><path d="M3.500 11v2.200M3.500 14v.6" stroke="#3a2a08" stroke-width="1"/></svg>
<div class="t" style="left:154.85px;top:161.57px;font-size:11.6px;line-height:14.50px;color:#050505;letter-spacing:0.037px;">Java Resources</div>
<svg class="a" style="left:140.89999999999998px;top:182.25px;" width="9" height="8" viewBox="0 0 9 8" preserveAspectRatio="none"><path d="M.2.300h8.600l-4.300 7.200z" fill="#6f6f6f"/></svg>
<svg class="a" style="left:152.7px;top:178.45px;" width="16" height="16" viewBox="0 0 16 16" preserveAspectRatio="none"><rect x="6.800" y="2.800" width="7.400" height="6" fill="#e8b88a" stroke="#8a4a2c" stroke-width=".9"/><path d="M10.500 2v7M6 5.800h9M8.600 2.800v6M12.400 2.800v6" stroke="#7a3e24" stroke-width=".9"/><path d="M3 9c1.500-1.500 3-2.200 4.500-1.700l3 1c1 .3 1 1.400 0 1.400l4-.4c1.200-.1 1.500.9.500 1.700l-3.500 2.800c-.8.500-1.800.7-3 .5l-5.500-.8z" fill="#f8d98c" stroke="#c08a30" stroke-width=".8" stroke-linejoin="round"/><path d="M3.500 9.200L.300 15.200h6.400z" fill="#fbd45c" stroke="#c98a1c" stroke-width=".8" stroke-linejoin="round"/><path d="M3.500 11v2.200M3.500 14v.6" stroke="#3a2a08" stroke-width="1"/></svg>
<div class="t" style="left:171.20px;top:179.07px;font-size:11.6px;line-height:14.50px;color:#050505;letter-spacing:0.419px;">src</div>
<svg class="a" style="left:157.45px;top:199.75px;" width="9" height="8" viewBox="0 0 9 8" preserveAspectRatio="none"><path d="M.2.300h8.600l-4.300 7.200z" fill="#6f6f6f"/></svg>
<svg class="a" style="left:169.25px;top:195.95px;" width="16" height="16" viewBox="0 0 16 16" preserveAspectRatio="none"><rect x="4" y="2" width="11" height="11" fill="#e8b88a" stroke="#a8683c" stroke-width=".9"/><path d="M9.500 1v13M3 7.500h13" stroke="#8a4a2c" stroke-width="1.400"/><path d="M4.500 2.500h4v4h-4zM10.500 8.500h4v4h-4z" fill="#f2cfa6"/><path d="M3.500 9.200L.300 15.200h6.400z" fill="#fbd45c" stroke="#c98a1c" stroke-width=".8" stroke-linejoin="round"/><path d="M3.500 11v2.200M3.500 14v.6" stroke="#3a2a08" stroke-width="1"/></svg>
<div class="t" style="left:187.75px;top:196.57px;font-size:11.6px;line-height:14.50px;color:#050505;letter-spacing:0.207px;">tw.brad.javaee</div>
<svg class="a" style="left:174.8px;top:216.95px;" width="8" height="9" viewBox="0 0 8 9" preserveAspectRatio="none"><path d="M.3.200l7.200 4.300-7.200 4.300z" fill="#6f6f6f"/></svg>
<svg class="a" style="left:185.5px;top:213.45px;" width="16" height="16" viewBox="0 0 16 16" preserveAspectRatio="none"><path d="M4.200 1.400h6l3.200 3.200v10H4.200z" fill="#fff" stroke="#b49a68" stroke-width=".9"/><path d="M10.200 1.400v3.200h3.200" fill="#f3e7c4" stroke="#b49a68" stroke-width=".9"/><path d="M9.600 5v5.200c0 1.300-.7 2-1.900 2-.6 0-1.100-.1-1.500-.4" fill="none" stroke="#2d5fb4" stroke-width="1.700"/><path d="M3.500 9.200L.300 15.200h6.400z" fill="#fbd45c" stroke="#c98a1c" stroke-width=".8" stroke-linejoin="round"/><path d="M3.500 11v2.200M3.500 14v.6" stroke="#3a2a08" stroke-width="1"/></svg>
<div class="t" style="left:204.00px;top:214.07px;font-size:11.6px;line-height:14.50px;color:#050505;letter-spacing:0.191px;">Image01.java</div>
<svg class="a" style="left:169.25px;top:230.95px;" width="16" height="16" viewBox="0 0 16 16" preserveAspectRatio="none"><rect x="3.800" y="3" width="10.500" height="10.500" fill="#fff" stroke="#5a5f6c" stroke-width="1"/><path d="M9 1.500v13.500M2.300 8.200h13.500" stroke="#5a5f6c" stroke-width="1.100"/></svg>
<div class="t" style="left:187.75px;top:231.57px;font-size:11.6px;line-height:14.50px;color:#050505;letter-spacing:0.414px;">tw.brad.util</div>
<svg class="a" style="left:142.0px;top:251.95px;" width="8" height="9" viewBox="0 0 8 9" preserveAspectRatio="none"><path d="M.3.200l7.200 4.300-7.200 4.300z" fill="#6f6f6f"/></svg>
<svg class="a" style="left:152.7px;top:248.45px;" width="16" height="16" viewBox="0 0 16 16" preserveAspectRatio="none"><rect x=".8" y="3.200" width="9.500" height="3" rx=".5" fill="#3f7fa8" stroke="#2c5878" stroke-width=".6"/><rect x="1.500" y="6.200" width="9" height="3" rx=".5" fill="#3f9870" stroke="#2a6a4c" stroke-width=".6"/><rect x=".8" y="9.700" width="10" height="3.600" rx=".5" fill="#c86a3c" stroke="#9a4a24" stroke-width=".6"/><path d="M1.500 11.500h8.500" stroke="#e8a070" stroke-width=".8"/><path d="M10 1l1.800-.5L15.700 13l-2.500.7L10 2.500z" fill="#e8a848" stroke="#b87828" stroke-width=".7"/></svg>
<div class="t" style="left:171.20px;top:249.07px;font-size:11.6px;line-height:14.50px;color:#050505;letter-spacing:0.227px;">Libraries</div>
<svg class="a" style="left:125.64999999999999px;top:269.45px;" width="8" height="9" viewBox="0 0 8 9" preserveAspectRatio="none"><path d="M.3.200l7.200 4.300-7.200 4.300z" fill="#6f6f6f"/></svg>
<svg class="a" style="left:136.35px;top:265.95px;" width="16" height="16" viewBox="0 0 16 16" preserveAspectRatio="none"><rect x=".8" y="3.200" width="9.500" height="3" rx=".5" fill="#3f7fa8" stroke="#2c5878" stroke-width=".6"/><rect x="1.500" y="6.200" width="9" height="3" rx=".5" fill="#3f9870" stroke="#2a6a4c" stroke-width=".6"/><rect x=".8" y="9.700" width="10" height="3.600" rx=".5" fill="#c86a3c" stroke="#9a4a24" stroke-width=".6"/><path d="M1.500 11.500h8.500" stroke="#e8a070" stroke-width=".8"/><path d="M10 1l1.800-.5L15.700 13l-2.500.7L10 2.500z" fill="#e8a848" stroke="#b87828" stroke-width=".7"/></svg>
<div class="t" style="left:154.85px;top:266.57px;font-size:11.6px;line-height:14.50px;color:#050505;letter-spacing:0.136px;">JavaScript Resources</div>
<svg class="a" style="left:125.64999999999999px;top:286.95px;" width="8" height="9" viewBox="0 0 8 9" preserveAspectRatio="none"><path d="M.3.200l7.200 4.300-7.200 4.300z" fill="#6f6f6f"/></svg>
<svg class="a" style="left:136.35px;top:283.45px;" width="16" height="16" viewBox="0 0 16 16" preserveAspectRatio="none"><path d="M1.300 13.200V3.200c0-.5.300-.8.800-.8h3.300c.4 0 .7.200.9.500l.7 1h5.200c.5 0 .8.300.8.800v2" fill="#f9e2a6" stroke="#c48e3e" stroke-width=".9"/><path d="M1.300 13.400l2.700-6.600h11.600l-2.700 6.600z" fill="#fcebbb" stroke="#c48e3e" stroke-width=".9" stroke-linejoin="round"/></svg>
<div class="t" style="left:154.85px;top:284.07px;font-size:11.6px;line-height:14.50px;color:#050505;letter-spacing:0.285px;">build</div>
<svg class="a" style="left:124.55px;top:304.75px;" width="9" height="8" viewBox="0 0 9 8" preserveAspectRatio="none"><path d="M.2.300h8.600l-4.300 7.200z" fill="#6f6f6f"/></svg>
<svg class="a" style="left:136.35px;top:300.95px;" width="16" height="16" viewBox="0 0 16 16" preserveAspectRatio="none"><path d="M1.300 13.200V3.200c0-.5.300-.8.800-.8h3.300c.4 0 .7.200.9.500l.7 1h5.200c.5 0 .8.300.8.800v2" fill="#f9e2a6" stroke="#c48e3e" stroke-width=".9"/><path d="M1.300 13.400l2.700-6.600h11.600l-2.700 6.600z" fill="#fcebbb" stroke="#c48e3e" stroke-width=".9" stroke-linejoin="round"/></svg>
<div class="t" style="left:154.85px;top:301.57px;font-size:11.6px;line-height:14.50px;color:#050505;letter-spacing:0.237px;">WebContent</div>
<svg class="a" style="left:142.0px;top:321.95px;" width="8" height="9" viewBox="0 0 8 9" preserveAspectRatio="none"><path d="M.3.200l7.200 4.300-7.200 4.300z" fill="#6f6f6f"/></svg>
<svg class="a" style="left:152.7px;top:318.45px;" width="16" height="16" viewBox="0 0 16 16" preserveAspectRatio="none"><path d="M1.300 13.200V3.200c0-.5.300-.8.800-.8h3.300c.4 0 .7.200.9.500l.7 1h5.200c.5 0 .8.300.8.800v2" fill="#f9e2a6" stroke="#c48e3e" stroke-width=".9"/><path d="M1.300 13.400l2.700-6.600h11.600l-2.700 6.600z" fill="#fcebbb" stroke="#c48e3e" stroke-width=".9" stroke-linejoin="round"/></svg>
<div class="t" style="left:171.20px;top:319.07px;font-size:11.6px;line-height:14.50px;color:#050505;letter-spacing:-0.087px;">META-INF</div>
<svg class="a" style="left:142.0px;top:339.45px;" width="8" height="9" viewBox="0 0 8 9" preserveAspectRatio="none"><path d="M.3.200l7.200 4.300-7.200 4.300z" fill="#6f6f6f"/></svg>
<svg class="a" style="left:152.7px;top:335.95px;" width="16" height="16" viewBox="0 0 16 16" preserveAspectRatio="none"><path d="M1.300 13.200V3.200c0-.5.300-.8.800-.8h3.300c.4 0 .7.200.9.500l.7 1h5.200c.5 0 .8.300.8.800v2" fill="#f9e2a6" stroke="#c48e3e" stroke-width=".9"/><path d="M1.300 13.400l2.700-6.600h11.600l-2.700 6.600z" fill="#fcebbb" stroke="#c48e3e" stroke-width=".9" stroke-linejoin="round"/></svg>
<div class="t" style="left:171.20px;top:336.57px;font-size:11.6px;line-height:14.50px;color:#050505;letter-spacing:-0.112px;">WEB-INF</div>
<svg class="a" style="left:152.7px;top:353.45px;" width="16" height="16" viewBox="0 0 16 16" preserveAspectRatio="none"><path d="M2.700 1.400h6.800l3.800 3.800v9.400H2.700z" fill="#fff" stroke="#b49a68" stroke-width=".9"/><path d="M9.500 1.400v3.800h3.800" fill="#f3e7c4" stroke="#b49a68" stroke-width=".9"/><path d="M4.500 5.500h3M4.500 7.500h2" stroke="#c0504d" stroke-width="1"/><path d="M6.500 7.500h4.500M6 9.500h5" stroke="#4f6fbe" stroke-width="1"/><path d="M4.500 9.500h1.500M4.500 11.500h3" stroke="#a04fa8" stroke-width="1"/><path d="M7.500 11.500h3.500" stroke="#4fa88c" stroke-width="1"/></svg>
<div class="t" style="left:171.20px;top:354.07px;font-size:11.6px;line-height:14.50px;color:#050505;letter-spacing:0.468px;">ettest1.jsp</div>
<svg class="a" style="left:152.7px;top:370.95px;" width="16" height="16" viewBox="0 0 16 16" preserveAspectRatio="none"><path d="M2.700 1.400h6.800l3.800 3.800v9.400H2.700z" fill="#fff" stroke="#b49a68" stroke-width=".9"/><path d="M9.500 1.400v3.800h3.800" fill="#f3e7c4" stroke="#b49a68" stroke-width=".9"/><path d="M4.800 5h2.500v2h-2.500z" fill="#c0504d"/><path d="M6.300 6h3v5h-3z" fill="#6f8fd8"/><path d="M7.800 8.500l2.800 3.500h-2.800z" fill="#4f6fbe"/><path d="M4.800 10.500h2v2h-2z" fill="#8fc89c"/><path d="M7.200 4.500l1.800 3" stroke="#8f6fc8" stroke-width=".9"/></svg>
<div class="t" style="left:171.20px;top:371.57px;font-size:11.6px;line-height:14.50px;color:#050505;letter-spacing:0.323px;">hello.html</div>
<svg class="a" style="left:152.7px;top:388.45px;" width="16" height="16" viewBox="0 0 16 16" preserveAspectRatio="none"><path d="M2.700 1.400h6.800l3.800 3.800v9.400H2.700z" fill="#fff" stroke="#b49a68" stroke-width=".9"/><path d="M9.500 1.400v3.800h3.800" fill="#f3e7c4" stroke="#b49a68" stroke-width=".9"/><path d="M4.500 5.500h3M4.500 7.500h2" stroke="#c0504d" stroke-width="1"/><path d="M6.500 7.500h4.500M6 9.500h5" stroke="#4f6fbe" stroke-width="1"/><path d="M4.500 9.500h1.500M4.500 11.500h3" stroke="#a04fa8" stroke-width="1"/><path d="M7.500 11.500h3.500" stroke="#4fa88c" stroke-width="1"/></svg>
<div class="t" style="left:171.20px;top:389.07px;font-size:11.6px;line-height:14.50px;color:#050505;letter-spacing:0.217px;">hello.jsp</div>
<svg class="a" style="left:152.7px;top:405.95px;" width="16" height="16" viewBox="0 0 16 16" preserveAspectRatio="none"><path d="M2.700 1.400h6.800l3.800 3.800v9.400H2.700z" fill="#fff" stroke="#b49a68" stroke-width=".9"/><path d="M9.500 1.400v3.800h3.800" fill="#f3e7c4" stroke="#b49a68" stroke-width=".9"/><path d="M4.800 5h2.500v2h-2.500z" fill="#c0504d"/><path d="M6.300 6h3v5h-3z" fill="#6f8fd8"/><path d="M7.800 8.500l2.800 3.500h-2.800z" fill="#4f6fbe"/><path d="M4.800 10.500h2v2h-2z" fill="#8fc89c"/><path d="M7.200 4.500l1.800 3" stroke="#8f6fc8" stroke-width=".9"/></svg>
<div class="t" style="left:171.20px;top:406.57px;font-size:11.6px;line-height:14.50px;color:#050505;letter-spacing:0.382px;">imgTest.html</div>
<svg class="a" style="left:109.3px;top:426.95px;" width="8" height="9" viewBox="0 0 8 9" preserveAspectRatio="none"><path d="M.3.200l7.200 4.300-7.200 4.300z" fill="#6f6f6f"/></svg>
<svg class="a" style="left:120.0px;top:423.45px;" width="16" height="16" viewBox="0 0 16 16" preserveAspectRatio="none"><path d="M1.300 12.500V3.200c0-.5.300-.8.800-.8h3.300c.4 0 .7.200.9.500l.7 1h5.200c.5 0 .8.300.8.800v3" fill="#f9e2a6" stroke="#c9a55c" stroke-width=".9"/><path d="M1.400 13.600l3-5h11.200l-3 5z" fill="#5a9cf0" stroke="#2f5fb0" stroke-width=".9" stroke-linejoin="round"/></svg>
<div class="t" style="left:138.50px;top:424.07px;font-size:11.6px;line-height:14.50px;color:#050505;letter-spacing:0.006px;">Servers</div>
<div class="a" style="left:403px;top:78.8px;width:1387px;height:28px;background:linear-gradient(#f4f4f4,#ececec 35%,#d8d8d8);border-radius:6px 6px 0 0;border:1px solid #c6c6c6;border-bottom:none;"></div>
<div class="a" style="left:403.5px;top:79.5px;width:108.3px;height:27px;background:linear-gradient(#e4edfb,#c6daf6 45%,#9dc2f3);border-radius:7px 9px 0 0;box-shadow:1px 0 1.500px rgba(0,0,0,.12);"></div>
<div class="a" style="left:397.3px;top:82px;width:6.4px;height:968px;background:linear-gradient(90deg,#e4e4e4,#efefef 45%,#ececec);"></div>
<div class="a" style="left:404px;top:105px;width:1386px;height:652.8px;background:linear-gradient(135deg,#8cb2e6 0,#8fb3e4 55%,#9bb4da 70%,#9db4d6);border-radius:0 0 4px 4px;"></div>
<div class="a" style="left:405.8px;top:107.6px;width:1381.4px;height:646.7px;background:#fff;"></div>
<svg class="a" style="left:408px;top:86px;" width="16" height="16" viewBox="0 0 16 16" preserveAspectRatio="none"><path d="M2.700 1.400h6.800l3.800 3.800v9.400H2.700z" fill="#fff" stroke="#b49a68" stroke-width=".9"/><path d="M9.500 1.400v3.800h3.800" fill="#f3e7c4" stroke="#b49a68" stroke-width=".9"/><path d="M4.500 5.500h3M4.500 7.500h2" stroke="#c0504d" stroke-width="1"/><path d="M6.500 7.500h4.500M6 9.500h5" stroke="#4f6fbe" stroke-width="1"/><path d="M4.500 9.500h1.500M4.500 11.500h3" stroke="#a04fa8" stroke-width="1"/><path d="M7.500 11.500h3.500" stroke="#4fa88c" stroke-width="1"/></svg>
<div class="t" style="left:428.70px;top:86.93px;font-size:11.8px;line-height:14.75px;color:#050505;letter-spacing:0.281px;">ettest1.jsp</div>
<svg class="a" style="left:493px;top:87.5px;" width="12" height="12" viewBox="0 0 12 12" preserveAspectRatio="none"><path d="M2.300 2.300l7.400 7.400M9.700 2.300l-7.400 7.400" stroke="#1c1c1c" stroke-width="3.700" stroke-linecap="round"/><path d="M2.300 2.300l7.400 7.400M9.700 2.300l-7.400 7.400" stroke="#fff" stroke-width="1.500" stroke-linecap="round"/></svg>
<svg class="a" style="left:1743px;top:87.3px;" width="11" height="5" viewBox="0 0 11 5" preserveAspectRatio="none"><rect x=".6" y=".6" width="9.300" height="3.300" rx=".5" fill="#fff" stroke="#666" stroke-width="1.100"/></svg>
<svg class="a" style="left:1765.3px;top:87.3px;" width="11" height="11" viewBox="0 0 11 11" preserveAspectRatio="none"><rect x=".6" y=".6" width="9.600" height="9.600" fill="#fff" stroke="#6c6c6c" stroke-width="1.100"/><rect x=".6" y=".6" width="9.600" height="2.400" fill="#8a8a8a"/></svg>
<div class="a" style="left:1758px;top:107.6px;width:15.7px;height:646.7px;background:linear-gradient(90deg,#f1f1f1,#fafafa 30%,#f8f8f8 85%,#efefef);"></div>
<div class="a" style="left:451px;top:739.8px;width:1307px;height:14.5px;background:linear-gradient(#efefef,#f8f8f8 30%,#f9f9f9);"></div>
<div class="a" style="left:1758px;top:739.8px;width:29px;height:14.5px;background:#fbfbfb;"></div>
<div class="a" style="left:405.8px;top:410.4px;width:12px;height:42.6px;background:#d6e5f9;"></div>
<div class="a" style="left:453px;top:432px;width:1305px;height:21.3px;background:#e8f2fe;"></div>
<div class="a" style="left:1775.5px;top:440px;width:9.5px;height:5.5px;background:#ffb3dc;border:1px solid #d23a78;"></div>
<div class="a" style="left:1775.8px;top:742.9px;width:8.1px;height:7.6px;background:#f0046a;"></div>
<svg class="a" style="left:406.3px;top:435.9px;" width="12" height="12" viewBox="0 0 12 12" preserveAspectRatio="none"><circle cx="6" cy="6" r="5.500" fill="#d23434" stroke="#f4d0d0" stroke-width=".6"/><path d="M3.500 3.300l5 5.400M8.500 3.300l-5 5.400" stroke="#fff" stroke-width="1.700"/></svg>
<div class="c ln" style="left:429.29px;top:108.90px">1</div>
<div class="c" style="left:452.700px;top:108.90px"><span class="dr">&lt;%@</span> <span class="tg">page</span> <span class="at">language</span>=<span class="q">&quot;</span><span class="vl">java</span><span class="q">&quot;</span> <span class="at">contentType</span>=<span class="q">&quot;</span><span class="vl">text/html; charset=UTF–8</span><span class="q">&quot;</span></div>
<div class="c ln" style="left:429.29px;top:130.49px">2</div>
<div class="c" style="left:452.700px;top:130.49px">    <span class="at">pageEncoding</span>=<span class="q">&quot;</span><span class="vl">UTF–8</span><span class="q">&quot;</span><span class="dr">%&gt;</span></div>
<div class="c ln" style="left:429.29px;top:152.08px">3</div>
<div class="c" style="left:452.700px;top:152.08px"><span class="tg">&lt;!DOCTYPE html&gt;</span></div>
<div class="c ln" style="left:429.29px;top:173.67px">4</div>
<div class="c" style="left:452.700px;top:173.67px"><span class="tg">&lt;html&gt;</span></div>
<div class="c ln" style="left:429.29px;top:195.26px">5</div>
<div class="c" style="left:452.700px;top:195.26px"><span class="tg">&lt;head&gt;</span></div>
<div class="c ln" style="left:429.29px;top:216.85px">6</div>
<div class="c" style="left:452.700px;top:216.85px"><span class="tg">&lt;meta</span> <span class="at">charset</span>=<span class="q">&quot;</span><span class="vl">UTF–8</span><span class="q">&quot;</span><span class="tg">&gt;</span></div>
<div class="c ln" style="left:429.29px;top:238.44px">7</div>
<div class="c" style="left:452.700px;top:238.44px"><span class="tg">&lt;title&gt;</span>Insert title here<span class="tg">&lt;/title&gt;</span></div>
<div class="c ln" style="left:429.29px;top:260.03px">8</div>
<div class="c" style="left:452.700px;top:260.03px"><span class="tg">&lt;/head&gt;</span></div>
<div class="c ln" style="left:429.29px;top:281.62px">9</div>
<div class="c" style="left:452.700px;top:281.62px"><span class="tg">&lt;body&gt;</span></div>
<div class="c ln" style="left:418.18px;top:303.21px">10</div>
<div class="c ln" style="left:418.18px;top:324.80px">11</div>
<div class="c" style="left:452.700px;top:324.80px"><span class="tg">&lt;form&gt;</span></div>
<div class="c ln" style="left:418.18px;top:346.39px">12</div>
<div class="c" style="left:452.700px;top:346.39px">    <span class="tg">&lt;input</span> <span class="at">type</span>=<span class="q">&quot;</span><span class="vl">number</span><span class="q">&quot;</span> <span class="at">name</span>=<span class="q">&quot;</span><span class="vl">x</span><span class="q">&quot;</span> <span class="tg">/&gt;</span></div>
<div class="c ln" style="left:418.18px;top:367.98px">13</div>
<div class="c" style="left:452.700px;top:367.98px">    +</div>
<div class="c ln" style="left:418.18px;top:389.57px">14</div>
<div class="c" style="left:452.700px;top:389.57px">    <span class="tg">&lt;input</span> <span class="at">type</span>=<span class="q">&quot;</span><span class="vl">number</span><span class="q">&quot;</span> <span class="at">name</span>=<span class="q">&quot;</span><span class="vl">y</span><span class="q">&quot;</span> <span class="tg">/&gt;</span></div>
<div class="c ln" style="left:418.18px;top:411.16px">15</div>
<div class="c" style="left:452.700px;top:411.16px">    <span class="tg">&lt;input</span> <span class="at">type</span>=<span class="q">&quot;</span><span class="vl">submit</span><span class="q">&quot;</span> <span class="at">value</span>=<span class="q">&quot;</span><span class="vl">=</span><span class="q">&quot;</span> <span class="tg">/&gt;</span></div>
<div class="c ln" style="left:418.18px;top:432.75px">16</div>
<div class="c" style="left:452.700px;top:432.75px">    ${param.x + param.y }</div>
<div class="c ln" style="left:418.18px;top:454.34px">17</div>
<div class="c" style="left:452.700px;top:454.34px"><span class="tg">&lt;/form&gt;</span></div>
<div class="c ln" style="left:418.18px;top:475.93px">18</div>
<div class="c ln" style="left:418.18px;top:497.52px">19</div>
<div class="c" style="left:452.700px;top:497.52px"><span class="tg">&lt;/body&gt;</span></div>
<div class="c ln" style="left:418.18px;top:519.11px">20</div>
<div class="c" style="left:452.700px;top:519.11px"><span class="tg">&lt;/html&gt;</span></div>
<svg class="a" style="left:440.5px;top:178.96999999999997px;" width="9" height="9" viewBox="0 0 9 9" preserveAspectRatio="none"><circle cx="4.500" cy="4.500" r="3.700" fill="#fff" stroke="#9fb0c8" stroke-width=".9"/><path d="M2.500 4.500h4" stroke="#7088a8" stroke-width="1"/></svg>
<svg class="a" style="left:440.5px;top:200.56px;" width="9" height="9" viewBox="0 0 9 9" preserveAspectRatio="none"><circle cx="4.500" cy="4.500" r="3.700" fill="#fff" stroke="#9fb0c8" stroke-width=".9"/><path d="M2.500 4.500h4" stroke="#7088a8" stroke-width="1"/></svg>
<svg class="a" style="left:440.5px;top:286.92px;" width="9" height="9" viewBox="0 0 9 9" preserveAspectRatio="none"><circle cx="4.500" cy="4.500" r="3.700" fill="#fff" stroke="#9fb0c8" stroke-width=".9"/><path d="M2.500 4.500h4" stroke="#7088a8" stroke-width="1"/></svg>
<svg class="a" style="left:440.5px;top:330.09999999999997px;" width="9" height="9" viewBox="0 0 9 9" preserveAspectRatio="none"><circle cx="4.500" cy="4.500" r="3.700" fill="#fff" stroke="#9fb0c8" stroke-width=".9"/><path d="M2.500 4.500h4" stroke="#7088a8" stroke-width="1"/></svg>
<div class="a" style="left:631.5px;top:435px;width:1.3px;height:17.5px;background:#111;"></div>
<svg class="a" style="left:632px;top:449.3px;" width="100" height="4" viewBox="0 0 100 4" preserveAspectRatio="none"><path d="M.5 1.800h99" fill="none" stroke="#e2267c" stroke-width="1.500" stroke-dasharray="1.600 1.400"/></svg>
<div class="a" style="left:403px;top:762px;width:1387px;height:289px;background:#f4f4f4;border:1px solid #dcdcdc;border-top-color:#dedede;border-radius:6px 6px 3px 3px;"></div>
<div class="a" style="left:404px;top:763px;width:1385px;height:27px;background:linear-gradient(#ececec,#f4f4f4 50%,#fefefe);border-radius:6px 6px 0 0;"></div>
<div class="a" style="left:404.5px;top:790px;width:1384px;height:260.5px;background:#fff;"></div>
<div class="a" style="left:564.5px;top:762.5px;width:90.5px;height:27px;background:linear-gradient(#ffffff,#fbfbfb 45%,#e6e6e6);border-radius:7px 9px 0 0;box-shadow:0 0 1.500px rgba(0,0,0,.2);"></div>
<div class="a" style="left:404.5px;top:788.8px;width:1384px;height:1.4px;background:linear-gradient(#ededed,#fafafa);"></div>
<svg class="a" style="left:407.5px;top:769px;" width="15" height="15" viewBox="0 0 15 15" preserveAspectRatio="none"><path d="M.7 .7h11.500c1.200 2 1.200 4-.2 6.500 1.300 2.500 1.300 4.500.2 6.600H.7z" fill="#f0f2f8" stroke="#a4acc4" stroke-width=".8"/><circle cx="5.300" cy="4.200" r="2.500" fill="#e25c5c" stroke="#c83c3c" stroke-width=".5"/><circle cx="5.300" cy="10.500" r="2.500" fill="#f4b850" stroke="#d89828" stroke-width=".5"/></svg>
<div class="t" style="left:428.30px;top:769.62px;font-size:11.6px;line-height:14.50px;color:#626262;letter-spacing:0.101px;">Markers</div>
<svg class="a" style="left:482.5px;top:769.5px;" width="15" height="14" viewBox="0 0 15 14" preserveAspectRatio="none"><rect x=".7" y=".7" width="13.500" height="12.500" fill="#fff" stroke="#8a8a96" stroke-width=".9"/><rect x=".7" y=".7" width="13.500" height="2.600" fill="#c8ccd8"/><path d="M1 6.200h13M1 9.200h13M5.500 3.300v10" stroke="#b8bcc8" stroke-width=".8"/></svg>
<div class="t" style="left:502.00px;top:769.62px;font-size:11.6px;line-height:14.50px;color:#626262;letter-spacing:0.292px;">Properties</div>
<svg class="a" style="left:569.5px;top:768.5px;" width="15" height="16" viewBox="0 0 15 16" preserveAspectRatio="none"><path d="M3.500 3v10M7.500 2v12M11.500 3v10" stroke="#5a6a7a" stroke-width="1.300"/><circle cx="3.500" cy="9.500" r="2.400" fill="#6cb04c" stroke="#3a7a24" stroke-width=".7"/><circle cx="7.500" cy="5.500" r="2.400" fill="#e8b040" stroke="#a87818" stroke-width=".7"/><circle cx="11.500" cy="11" r="2.400" fill="#5a8ad8" stroke="#2a4a98" stroke-width=".7"/></svg>
<div class="t" style="left:588.75px;top:769.62px;font-size:11.6px;line-height:14.50px;color:#050505;letter-spacing:0.006px;">Servers</div>
<svg class="a" style="left:636.5px;top:770.5px;" width="12" height="12" viewBox="0 0 12 12" preserveAspectRatio="none"><path d="M2.300 2.300l7.400 7.400M9.700 2.300l-7.400 7.400" stroke="#1c1c1c" stroke-width="3.700" stroke-linecap="round"/><path d="M2.300 2.300l7.400 7.400M9.700 2.300l-7.400 7.400" stroke="#fff" stroke-width="1.500" stroke-linecap="round"/></svg>
<svg class="a" style="left:659px;top:768.5px;" width="17" height="16" viewBox="0 0 17 16" preserveAspectRatio="none"><path d="M.8 3l5-1.800 5 1.800 5-1.800v11.600l-5 1.800-5-1.800-5 1.800z" fill="#b8d488" stroke="#7a9848" stroke-width=".8"/><path d="M5.800 1.200v11.600M10.800 3v11.600" stroke="#8aa858" stroke-width=".8"/><path d="M2 9l3-2 3 3 3-4 4 2" fill="none" stroke="#d8b050" stroke-width="1.200"/><circle cx="8" cy="6" r="1.500" fill="#88b8d8"/></svg>
<div class="t" style="left:680.00px;top:769.62px;font-size:11.6px;line-height:14.50px;color:#626262;letter-spacing:0.126px;">Data Source Explorer</div>
<svg class="a" style="left:805px;top:769px;" width="15" height="15" viewBox="0 0 15 15" preserveAspectRatio="none"><path d="M2 3.500h11v10.800H2z" fill="#f0f0f4" stroke="#9a9aaa" stroke-width=".8"/><path d="M3.500 1l3 2.500-3 2.500z" fill="#7a9ad8" stroke="#4a6aa8" stroke-width=".6"/><path d="M5 7.500h6M5 9.500h6M5 11.500h4" stroke="#b8b8c8" stroke-width=".8"/><path d="M8 1.500h5v3" fill="none" stroke="#9a9aaa" stroke-width=".8"/></svg>
<div class="t" style="left:824.00px;top:769.62px;font-size:11.6px;line-height:14.50px;color:#626262;letter-spacing:0.237px;">Snippets</div>
<svg class="a" style="left:882.5px;top:769px;" width="15" height="15" viewBox="0 0 15 15" preserveAspectRatio="none"><rect x=".8" y="1" width="13" height="9.800" rx="1" fill="#e8eef8" stroke="#5a7abc" stroke-width="1.200"/><rect x="2.500" y="2.800" width="9.600" height="6.200" fill="#fff" stroke="#a8bce0" stroke-width=".6"/><path d="M4 5h4M4 7h6" stroke="#7a94c8" stroke-width=".8"/><path d="M4 13.500h7M7.300 11v2.500" stroke="#5a7abc" stroke-width="1.400"/></svg>
<div class="t" style="left:901.25px;top:769.62px;font-size:11.6px;line-height:14.50px;color:#626262;letter-spacing:0.065px;">Console</div>
<svg class="a" style="left:1579.5px;top:768.8px;" width="15" height="15" viewBox="0 0 15 15" preserveAspectRatio="none"><rect x=".8" y=".8" width="10.800" height="10.800" fill="#dce6f2" stroke="#9ab0cc" stroke-width=".9"/><rect x="3" y="3.200" width="11" height="11" fill="#e4f4ff" stroke="#6f8fb4" stroke-width="1.100"/><rect x="3" y="3.200" width="11" height="1.800" fill="#a8c0dc"/><path d="M5.200 9.300h6.600" stroke="#2f5f94" stroke-width="1.800"/></svg>
<svg class="a" style="left:1602px;top:768.5px;" width="15" height="15" viewBox="0 0 15 15" preserveAspectRatio="none"><ellipse cx="7.500" cy="8.500" rx="3.300" ry="4" fill="#d6d6d6"/><circle cx="7.500" cy="3.800" r="1.800" fill="#d6d6d6"/><path d="M1.500 4l3 2.500M13.500 4l-3 2.500M1 8.500h3M14 8.500h-3M1.500 13l3-2.500M13.500 13l-3-2.500" stroke="#d6d6d6" stroke-width="1.100"/></svg>
<svg class="a" style="left:1624px;top:768.5px;" width="15" height="15" viewBox="0 0 15 15" preserveAspectRatio="none"><circle cx="7.500" cy="7.500" r="7" fill="#d6d6d6"/><path d="M5.500 3.800l5.500 3.700-5.500 3.700z" fill="#f2f2f2"/></svg>
<svg class="a" style="left:1646px;top:768px;" width="16" height="16" viewBox="0 0 16 16" preserveAspectRatio="none"><circle cx="9" cy="6" r="4.500" fill="#d6d6d6"/><path d="M1 15l5-6 2 2z" fill="#d6d6d6"/><circle cx="12" cy="3" r="2.500" fill="#e2e2e2"/></svg>
<svg class="a" style="left:1671.5px;top:770.5px;" width="12" height="12" viewBox="0 0 12 12" preserveAspectRatio="none"><rect x=".5" y=".5" width="10.500" height="10.500" fill="#ecd8dc" stroke="#e6dada" stroke-width=".8"/></svg>
<svg class="a" style="left:1692px;top:768px;" width="16" height="16" viewBox="0 0 16 16" preserveAspectRatio="none"><rect x="1" y="3" width="7" height="11" fill="#e6e6e6" stroke="#d6d6d6" stroke-width=".9"/><rect x="7" y="1" width="7" height="9" fill="#eee" stroke="#d6d6d6" stroke-width=".9"/><circle cx="12" cy="4" r="2.500" fill="#e2e2e2"/></svg>
<svg class="a" style="left:1719.5px;top:770px;" width="12" height="8" viewBox="0 0 12 8" preserveAspectRatio="none"><path d="M1 .8h10L6 6.600z" fill="#fff" stroke="#5c5c5c" stroke-width="1.200" stroke-linejoin="round"/></svg>
<svg class="a" style="left:1742.6px;top:770.3px;" width="11" height="5" viewBox="0 0 11 5" preserveAspectRatio="none"><rect x=".6" y=".6" width="9.300" height="3.300" rx=".5" fill="#fff" stroke="#666" stroke-width="1.100"/></svg>
<svg class="a" style="left:1765px;top:770.3px;" width="11" height="11" viewBox="0 0 11 11" preserveAspectRatio="none"><rect x=".6" y=".6" width="9.600" height="9.600" fill="#fff" stroke="#6c6c6c" stroke-width="1.100"/><rect x=".6" y=".6" width="9.600" height="2.400" fill="#8a8a8a"/></svg>
<svg class="a" style="left:413.5px;top:794.7px;" width="8" height="9" viewBox="0 0 8 9" preserveAspectRatio="none"><path d="M.3.200l7.200 4.300-7.200 4.300z" fill="#6f6f6f"/></svg>
<svg class="a" style="left:427.5px;top:791.2px;" width="14" height="16" viewBox="0 0 14 16" preserveAspectRatio="none"><rect x="1.500" y=".8" width="8.500" height="13.600" fill="#eef0f0" stroke="#6a6a72" stroke-width=".9"/><path d="M1.500 7h8.500" stroke="#6a6a72" stroke-width=".8"/><path d="M3 3h5.500M3 5h5.500" stroke="#4a9a4a" stroke-width="1"/><rect x="3.200" y="8.800" width="4.500" height="3.800" fill="#b8c8f0" stroke="#8a9ad0" stroke-width=".5"/><path d="M8.500 9.300l4.800 3.100-4.800 3.100z" fill="#2aa02a" stroke="#1a701a" stroke-width=".6"/></svg>
<div class="t" style="left:443.75px;top:792.12px;font-size:11.6px;line-height:14.50px;color:#050505;letter-spacing:0.314px;">Tomcat v8.5 Server at localhost</div>
<div class="t" style="left:620.80px;top:792.12px;font-size:11.6px;line-height:14.50px;color:#85764a;letter-spacing:0.392px;">[Started, Synchronized]</div>
<div class="a" style="left:1792px;top:80px;width:31.5px;height:82px;background:#ededed;border-radius:6px;border:1px solid #d9d9d9;"></div>
<svg class="a" style="left:1802.8px;top:96.8px;" width="10" height="8.5" viewBox="0 0 12 10" preserveAspectRatio="none"><rect x="3.500" y=".7" width="7" height="5" fill="#fff" stroke="#444" stroke-width="1.100"/><rect x=".7" y="3.700" width="7" height="5" fill="#fff" stroke="#444" stroke-width="1.100"/><path d="M3.500 1.200h7M.7 4.200h7" stroke="#444" stroke-width="1.400"/></svg>
<svg class="a" style="left:1799.5px;top:116px;" width="15" height="16" viewBox="0 0 15 16" preserveAspectRatio="none"><rect x=".8" y=".8" width="5" height="5" fill="#cfe0f8" stroke="#3f74c8" stroke-width="1.200"/><rect x=".8" y="10" width="5" height="5" fill="#cfe0f8" stroke="#3f74c8" stroke-width="1.200"/><path d="M8 3.300h6M8 12.500h6" stroke="#3f74c8" stroke-width="1.200"/><rect x="8" y="6.500" width="2.600" height="2.600" fill="#3f74c8"/><path d="M12 7.800h1.500" stroke="#3f74c8" stroke-width="1.200"/></svg>
<svg class="a" style="left:1801.5px;top:138.5px;" width="13" height="16" viewBox="0 0 13 16" preserveAspectRatio="none"><path d="M1 .8h11v12.500l-2.500 1.800-2-1.200-2 1.200-2-1.200L1 15z" fill="#d8d0ee" stroke="#6a6a8a" stroke-width=".9"/><path d="M3 3.500h7M3 5.500h7M3 7.500h7M3 9.500h7" stroke="#5a5a7a" stroke-width=".8"/><path d="M1.500 11.500h10v2l-2 1.500-2-1.200-2 1.200-2-1.200-2 1z" fill="#9a8ac8"/></svg>
<div class="a" style="left:1197.4px;top:1054px;width:1px;height:24px;background:#d2d2d2;"></div>
<div class="a" style="left:1198.4px;top:1054px;width:1px;height:24px;background:#f4f4f4;"></div>
<div class="a" style="left:1304.2px;top:1054px;width:1px;height:24px;background:#d2d2d2;"></div>
<div class="a" style="left:1305.2px;top:1054px;width:1px;height:24px;background:#f4f4f4;"></div>
<div class="a" style="left:1405.9px;top:1054px;width:1px;height:24px;background:#d2d2d2;"></div>
<div class="a" style="left:1406.9px;top:1054px;width:1px;height:24px;background:#f4f4f4;"></div>
<div class="t" style="left:1205.00px;top:1057.02px;font-size:11.6px;line-height:14.50px;color:#050505;letter-spacing:0.238px;">Writable</div>
<div class="t" style="left:1311.90px;top:1057.02px;font-size:11.6px;line-height:14.50px;color:#050505;letter-spacing:0.266px;">Smart Insert</div>
<div class="t" style="left:1413.00px;top:1057.02px;font-size:11.6px;line-height:14.50px;color:#050505;letter-spacing:0.504px;">16 : 17</div>
<svg class="a" style="left:1503px;top:1058px;" width="3" height="18" viewBox="0 0 3 18" preserveAspectRatio="none"><path d="M1.500 1v16" stroke="#9a9a9a" stroke-width="1.500" stroke-dasharray="1.500 2"/></svg>
<svg class="a" style="left:1806.5px;top:1058px;" width="14" height="18" viewBox="0 0 14 18" preserveAspectRatio="none"><path d="M7 1C3.800 1 2 3.300 2 5.800c0 2 1.300 3 2 4.500.3.700.3 1.200.3 1.700h5.400c0-.5 0-1 .3-1.700.7-1.500 2-2.500 2-4.500C12 3.300 10.200 1 7 1z" fill="#fbe48a" stroke="#d8a020" stroke-width="1.200"/><path d="M4.500 13.200h5M4.800 15h4.400" stroke="#6a6a8a" stroke-width="1.400"/><path d="M5.500 16.500h3" stroke="#4a4a6a" stroke-width="1.200"/></svg>
</div>
</body>
</html>
